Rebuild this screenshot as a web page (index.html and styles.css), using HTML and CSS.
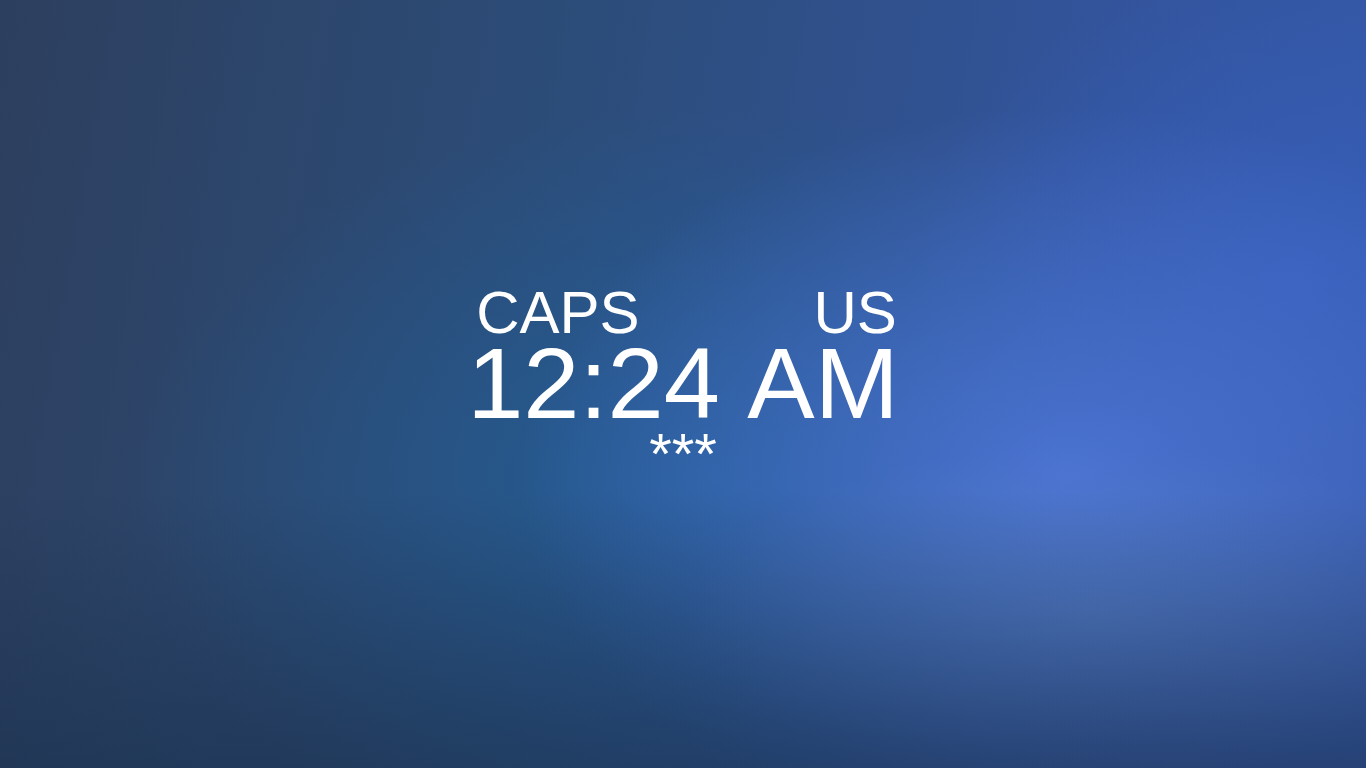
FILE: index.html
```html
<!DOCTYPE html>
<html lang="en">
<head>
<meta charset="utf-8">
<title>Lock screen</title>
<link rel="stylesheet" href="styles.css">
</head>
<body>
<main class="screen">
  <div class="clock">
    <div class="status">
      <span class="caps">CAPS</span>
      <span class="layout">US</span>
    </div>
    <div class="time">12:24 AM</div>
    <div class="password">***</div>
  </div>
</main>
</body>
</html>
```

FILE: styles.css
```css
html, body {
  margin: 0;
  padding: 0;
  height: 100%;
}

body {
  font-family: "Liberation Sans", Arial, sans-serif;
  color: #ffffff;
  overflow: hidden;
}

.screen {
  height: 100vh;
  display: flex;
  align-items: center;
  justify-content: center;
  background:
    linear-gradient(to bottom, rgba(24, 46, 74, 0) 64%, rgba(24, 46, 74, 0.55) 100%),
    radial-gradient(ellipse 30% 22% at 80% 80%, rgba(100, 140, 200, 0.4), rgba(100, 140, 200, 0) 100%),
    radial-gradient(ellipse 40% 48% at 78% 62%, rgba(76, 116, 212, 0.95), rgba(76, 116, 212, 0) 100%),
    radial-gradient(ellipse 28% 40% at 95% 35%, rgba(56, 100, 200, 0.6), rgba(56, 100, 200, 0) 100%),
    radial-gradient(ellipse 42% 48% at 52% 62%, rgba(32, 98, 156, 0.7), rgba(32, 98, 156, 0) 100%),
    linear-gradient(100deg, #2d3f5e 0%, #2c4d7a 40%, #33549c 75%, #3558a8 100%);
}

.clock {
  display: flex;
  flex-direction: column;
}

.status {
  display: flex;
  justify-content: space-between;
  font-size: 60px;
  line-height: 50px;
  padding-left: 9px;
  padding-right: 2px;
}

.time {
  font-size: 101px;
  line-height: 88px;
  word-spacing: 5px;
  white-space: nowrap;
  margin-top: 1px;
}

.password {
  font-size: 58px;
  line-height: 54px;
  text-align: center;
}
```
